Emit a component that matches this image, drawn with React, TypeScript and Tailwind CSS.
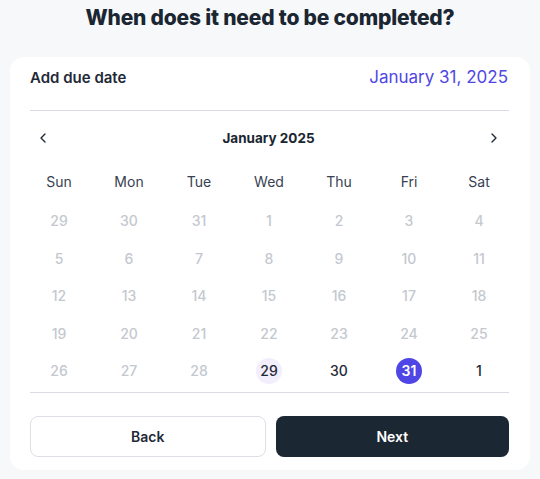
import React from "react";
import { ChevronLeft, ChevronRight } from "lucide-react";

const DAYS = ["Sun", "Mon", "Tue", "Wed", "Thu", "Fri", "Sat"];

type Cell = { day: number; muted?: boolean; kind?: "soft" | "selected" };

const weeks: Cell[][] = [
  [29, 30, 31, 1, 2, 3, 4].map((d) => ({ day: d, muted: true })),
  [5, 6, 7, 8, 9, 10, 11].map((d) => ({ day: d, muted: true })),
  [12, 13, 14, 15, 16, 17, 18].map((d) => ({ day: d, muted: true })),
  [19, 20, 21, 22, 23, 24, 25].map((d) => ({ day: d, muted: true })),
  [
    { day: 26, muted: true },
    { day: 27, muted: true },
    { day: 28, muted: true },
    { day: 29, kind: "soft" },
    { day: 30 },
    { day: 31, kind: "selected" },
    { day: 1 },
  ],
];

const DayCell: React.FC<{ cell: Cell }> = ({ cell }) => {
  let cls = "text-[#1f2937]";
  if (cell.muted) cls = "text-[#c4c8cf]";
  if (cell.kind === "soft") cls = "bg-[#f3eefc] text-[#1f2937]";
  if (cell.kind === "selected") cls = "bg-[#4f46e5] text-white font-semibold";
  return (
    <div className="flex h-[37.5px] items-center justify-center">
      <span className={`flex h-[26px] w-[26px] items-center justify-center rounded-full text-[14px] font-medium ${cls}`}>
        {cell.day}
      </span>
    </div>
  );
};

export default function App() {
  return (
    <div
      className="min-h-[479px] w-[540px] bg-[#f7f8fa] pt-[5px]"
      style={{ fontFamily: "Inter, 'Noto Sans', sans-serif" }}
    >
      <h1 className="text-center text-[21px] font-extrabold leading-[26px] tracking-[-0.2px] text-[#1a2631]">
        When does it need to be completed?
      </h1>

      <div className="mx-[10px] mt-[26px] rounded-[14px] bg-white px-[14px] pb-[13px] pt-[9px]">
        <div className="ml-[6px] mr-[8px] flex h-[24px] items-center justify-between">
          <span className="text-[15px] font-semibold text-[#1f2937]">Add due date</span>
          <span className="text-[17px] font-normal text-[#4f46e5]">January 31, 2025</span>
        </div>
        <div className="ml-[6px] mr-[7px] mt-[20px] border-t border-[#d9dde3]" />

        <div className="mt-[15px] flex h-[24px] items-center justify-between pl-[11px] pr-[14px]">
          <ChevronLeft size={16} strokeWidth={2} className="text-[#1f2937]" />
          <span className="text-[13.5px] font-bold text-[#1a2631]">January 2025</span>
          <ChevronRight size={16} strokeWidth={2} className="text-[#1f2937]" />
        </div>

        <div className="mt-[20px] grid grid-cols-7 pr-[2px]">
          {DAYS.map((d) => (
            <div key={d} className="flex h-[22px] items-center justify-center text-[14px] text-[#374151]">
              {d}
            </div>
          ))}
        </div>

        <div className="mt-[10px] pr-[2px]">
          {weeks.map((w, i) => (
            <div key={i} className="grid grid-cols-7">
              {w.map((c, j) => (
                <DayCell key={j} cell={c} />
              ))}
            </div>
          ))}
        </div>

        <div className="ml-[6px] mr-[7px] mt-[2px] border-t border-[#d9dde3]" />

        <div className="ml-[6px] mr-[7px] mt-[23px] flex gap-[10px]">
          <button className="h-[41px] flex-1 rounded-[8px] border border-[#dcdfe6] bg-white text-[14px] font-semibold text-[#1f2937]">
            Back
          </button>
          <button className="h-[41px] flex-1 rounded-[8px] bg-[#1b2733] text-[14px] font-semibold text-white">
            Next
          </button>
        </div>
      </div>
    </div>
  );
}
